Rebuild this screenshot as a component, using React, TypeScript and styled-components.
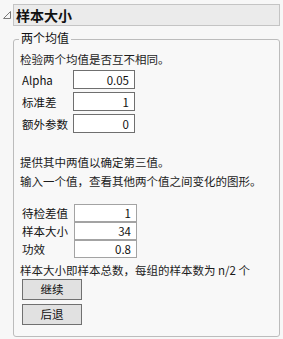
import React from "react";
import styled, { createGlobalStyle } from "styled-components";

const GlobalStyle = createGlobalStyle`
  html, body { margin: 0; padding: 0; background: #f7f7f7; }
  body {
    font-family: "Noto Sans CJK SC", "Noto Sans", sans-serif;
    font-size: 11.5px;
    color: #1c1c1c;
  }
  * { box-sizing: border-box; }
`;

const Page = styled.div`
  width: 283px;
  padding: 4px 3px 0 3px;
`;

const HeaderRow = styled.div`
  display: flex;
  align-items: center;
`;

const Toggle = styled.svg`
  flex: none;
  width: 8px;
  height: 8px;
  margin-right: 2px;
`;

const Header = styled.div`
  flex: none;
  width: 267px;
  height: 22px;
  border: 1px solid #c4c4c4;
  background: #ebebeb;
  font-size: 14px;
  font-weight: bold;
  line-height: 20px;
  padding-left: 2px;
  color: #111;
`;

const Group = styled.fieldset`
  margin: 4px 0 0 10px;
  width: 267px;
  min-width: 0;
  border: 1px solid #bcbcbc;
  border-radius: 3px;
  padding: 0 6px 11px 6px;
  background: #f8f8f8;
`;

const Legend = styled.legend`
  font-size: 12px;
  line-height: 16px;
  padding: 0 2px 2px 2px;
  margin-left: -1px;
  color: #111;
`;

const Line = styled.div<{ $top?: number }>`
  line-height: 19px;
  margin-top: ${(p) => p.$top ?? 0}px;
  white-space: nowrap;
`;

const Grid = styled.div<{ $label: number; $input: number; $gap: number; $top: number }>`
  display: grid;
  grid-template-columns: ${(p) => p.$label}px ${(p) => p.$input}px;
  row-gap: ${(p) => p.$gap}px;
  align-items: center;
  margin: ${(p) => p.$top}px 0 0 2px;
`;

const Label = styled.span`
  white-space: nowrap;
  color: #111;
`;

const Field = styled.input<{ $h: number; $border: string }>`
  width: 100%;
  height: ${(p) => p.$h}px;
  border: 1px solid ${(p) => p.$border};
  border-radius: 0;
  background: #fff;
  text-align: right;
  padding: 0 5px 0 2px;
  margin: 0;
  font-family: inherit;
  font-size: 11.5px;
  color: #111;
  outline: none;
`;

const Note = styled.div`
  line-height: 18px;
  margin-top: 3px;
  white-space: nowrap;
`;

const Buttons = styled.div`
  display: flex;
  flex-direction: column;
  gap: 4px;
  margin-left: 2px;
`;

const Button = styled.button`
  width: 60px;
  height: 21px;
  border: 1px solid #707070;
  border-radius: 0;
  background: #e1e1e1;
  font-family: inherit;
  font-size: 11.5px;
  color: #111;
  padding: 0;
  line-height: 19px;
`;

const first = [
  { label: "Alpha", value: "0.05" },
  { label: "标准差", value: "1" },
  { label: "额外参数", value: "0" },
];

const second = [
  { label: "待检差值", value: "1" },
  { label: "样本大小", value: "34" },
  { label: "功效", value: "0.8" },
];

export default function App() {
  return (
    <>
      <GlobalStyle />
      <Page>
        <HeaderRow>
          <Toggle viewBox="0 0 8 8">
            <polygon points="0.5,7.5 7.5,7.5 7.5,0.5" fill="none" stroke="#7a7a7a" strokeWidth="1" />
          </Toggle>
          <Header>样本大小</Header>
        </HeaderRow>
        <Group>
          <Legend>两个均值</Legend>
          <Line $top={2}>检验两个均值是否互不相同。</Line>
          <Grid $label={51} $input={62} $gap={3} $top={1}>
            {first.map((r) => (
              <React.Fragment key={r.label}>
                <Label>{r.label}</Label>
                <Field $h={19} $border="#6f6f6f" readOnly value={r.value} />
              </React.Fragment>
            ))}
          </Grid>
          <Line $top={20}>提供其中两值以确定第三值。</Line>
          <Line>输入一个值，查看其他两个值之间变化的图形。</Line>
          <Grid $label={52} $input={63} $gap={0} $top={13}>
            {second.map((r) => (
              <React.Fragment key={r.label}>
                <Label>{r.label}</Label>
                <Field $h={18} $border="#a3a3a3" readOnly value={r.value} />
              </React.Fragment>
            ))}
          </Grid>
          <Note>样本大小即样本总数，每组的样本数为 n/2 个</Note>
          <Buttons>
            <Button>继续</Button>
            <Button>后退</Button>
          </Buttons>
        </Group>
      </Page>
    </>
  );
}
